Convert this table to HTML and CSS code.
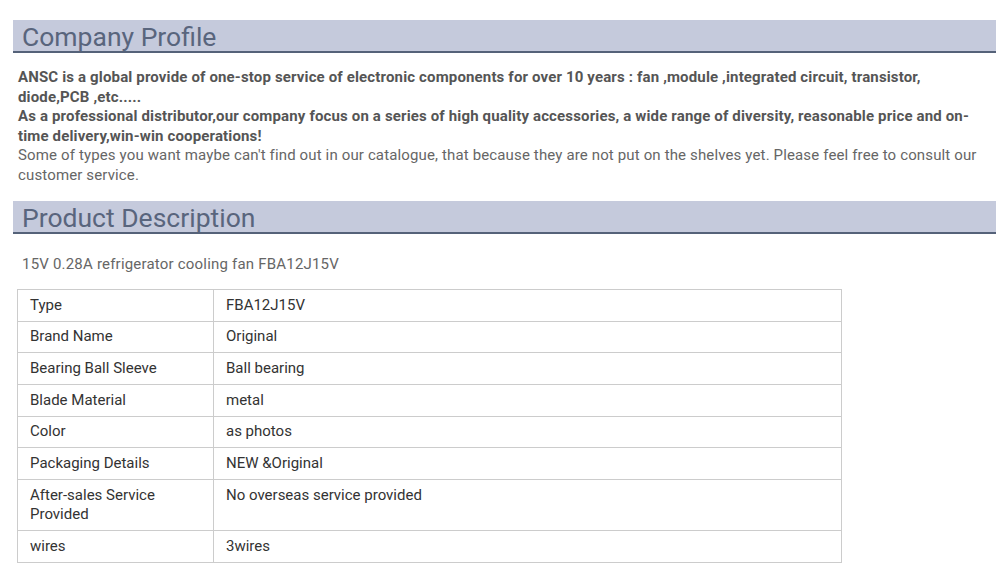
FILE: index.html
```html
<!DOCTYPE html>
<html>
<head>
<meta charset="utf-8">
<link rel="stylesheet" href="styles.css">
</head>
<body>
<div class="page">
  <h2 class="section-title">Company Profile</h2>
  <div class="profile">
    <p class="strong">ANSC is a global provide of one-stop service of electronic components for over 10 years : fan ,module ,integrated circuit, transistor, diode,PCB ,etc.....</p>
    <p class="strong">As a professional distributor,our company focus on a series of high quality accessories, a wide range of diversity, reasonable price and on-time delivery,win-win cooperations!</p>
    <p class="plain">Some of types you want maybe can't find out in our catalogue, that because they are not put on the shelves yet. Please feel free to consult our customer service.</p>
  </div>
  <h2 class="section-title">Product Description</h2>
  <p class="product-name">15V 0.28A refrigerator cooling fan FBA12J15V</p>
  <table class="specs">
    <tr><td class="key">Type</td><td>FBA12J15V</td></tr>
    <tr><td class="key">Brand Name</td><td>Original</td></tr>
    <tr><td class="key">Bearing Ball Sleeve</td><td>Ball bearing</td></tr>
    <tr><td class="key">Blade Material</td><td>metal</td></tr>
    <tr><td class="key">Color</td><td>as photos</td></tr>
    <tr><td class="key">Packaging Details</td><td>NEW &amp;Original</td></tr>
    <tr><td class="key">After-sales Service Provided</td><td>No overseas service provided</td></tr>
    <tr><td class="key">wires</td><td>3wires</td></tr>
  </table>
</div>
</body>
</html>
```
FILE: styles.css
```css
* { box-sizing: border-box; }
html, body { margin: 0; padding: 0; background: #fff; }
body {
  font-family: Roboto, "Liberation Sans", Arial, sans-serif;
  color: #666;
}
.page {
  padding: 20px 0 0 13px;
}
.section-title {
  margin: 0;
  height: 33px;
  background: #c5cadc;
  border-bottom: 2px solid #556279;
  color: #59657d;
  font-weight: 400;
  font-size: 26.5px;
  line-height: 33px;
  padding-left: 9px;
}
.profile {
  padding: 15px 10px 16px 5px;
  font-size: 15px;
  line-height: 19.5px;
}
.profile p { margin: 0; }
.profile .strong { font-weight: 700; color: #555; letter-spacing: 0.15px; }
.profile .plain { color: #666; letter-spacing: 0.14px; }
.product-name {
  margin: 0;
  padding: 20px 0 0 9px;
  font-size: 15px;
  line-height: 20px;
  color: #666;
  letter-spacing: 0.2px;
}
.specs {
  margin: 15px 0 0 4px;
  border-collapse: collapse;
  width: 825px;
  font-size: 15px;
  line-height: 19.5px;
  color: #333;
}
.specs td {
  border: 1px solid #ccc;
  padding: 5.6px 12px;
  vertical-align: top;
}
.specs td.key { width: 196px; }
```
